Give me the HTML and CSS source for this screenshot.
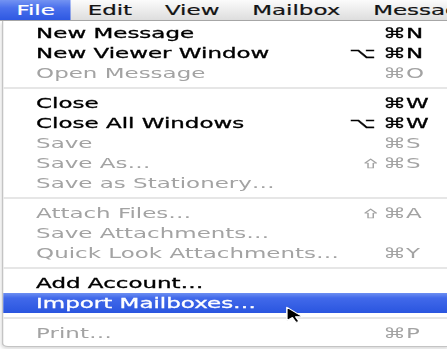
FILE: index.html
```html
<!DOCTYPE html>
<html lang="en">
<head>
    <meta charset="UTF-8">
    <meta name="viewport" content="width=device-width, initial-scale=1.0">
    <title>Mail - File menu</title>
    <link rel="stylesheet" href="styles.css">
</head>
<body>
    <div class="screen">
        <div class="menubar">
            <span class="title active">File</span>
            <span class="title">Edit</span>
            <span class="title">View</span>
            <span class="title">Mailbox</span>
            <span class="title">Message</span>
        </div>

        <div class="menu">
            <div class="item"><span class="label">New Message</span><span class="mods">&#8984;</span><span class="key">N</span></div>
            <div class="item"><span class="label">New Viewer Window</span><span class="mods">&#8997; &#8984;</span><span class="key">N</span></div>
            <div class="item off"><span class="label">Open Message</span><span class="mods">&#8984;</span><span class="key">O</span></div>
            <div class="sep"></div>

            <div class="item"><span class="label">Close</span><span class="mods">&#8984;</span><span class="key">W</span></div>
            <div class="item"><span class="label">Close All Windows</span><span class="mods">&#8997; &#8984;</span><span class="key">W</span></div>
            <div class="item off"><span class="label">Save</span><span class="mods">&#8984;</span><span class="key">S</span></div>
            <div class="item off"><span class="label">Save As&hellip;</span><span class="mods"><svg class="shift" viewBox="0 0 8 10" width="8" height="11"><path d="M4 0.6 L7.5 4.6 L5.6 4.6 L5.6 9.4 L2.4 9.4 L2.4 4.6 L0.5 4.6 Z" fill="none" stroke="currentColor" stroke-width="0.9" stroke-linejoin="round"/></svg>&#8984;</span><span class="key">S</span></div>
            <div class="item off"><span class="label">Save as Stationery&hellip;</span><span class="mods"></span><span class="key"></span></div>
            <div class="sep"></div>

            <div class="item off"><span class="label">Attach Files&hellip;</span><span class="mods"><svg class="shift" viewBox="0 0 8 10" width="8" height="11"><path d="M4 0.6 L7.5 4.6 L5.6 4.6 L5.6 9.4 L2.4 9.4 L2.4 4.6 L0.5 4.6 Z" fill="none" stroke="currentColor" stroke-width="0.9" stroke-linejoin="round"/></svg>&#8984;</span><span class="key">A</span></div>
            <div class="item off"><span class="label">Save Attachments&hellip;</span><span class="mods"></span><span class="key"></span></div>
            <div class="item off"><span class="label">Quick Look Attachments&hellip;</span><span class="mods">&#8984;</span><span class="key">Y</span></div>
            <div class="sep"></div>

            <div class="item"><span class="label">Add Account&hellip;</span><span class="mods"></span><span class="key"></span></div>
            <div class="item hover"><span class="label">Import Mailboxes&hellip;</span><span class="mods"></span><span class="key"></span></div>
            <div class="sep"></div>

            <div class="item off"><span class="label">Print&hellip;</span><span class="mods">&#8984;</span><span class="key">P</span></div>
        </div>

        <!-- mouse pointer over the highlighted row -->
        <svg class="cursor" viewBox="0 0 12 19" width="11" height="22">
            <path d="M1 1 L1 15.5 L4.6 12.2 L7 17.6 L9.2 16.6 L6.9 11.4 L11.5 11.4 Z" fill="#000" stroke="#fff" stroke-width="1" stroke-linejoin="round"/>
        </svg>
    </div>
</body>
</html>
```

FILE: styles.css
```css
body {
    margin: 0;
    background: #ffffff;
    font-family: "DejaVu Sans", Verdana, sans-serif;
    font-size: 14px;
    color: #000;
    overflow: hidden;
}

/* the screenshot was blown up wider than tall, so draw at native size and stretch */
.screen {
    position: relative;
    width: 272.6px;
    height: 349px;
    transform: scaleX(1.64);
    transform-origin: 0 0;
}

.menubar {
    display: flex;
    height: 20px;
    line-height: 20px;
    white-space: nowrap;
    overflow: hidden;
    background: linear-gradient(#fbfbfb, #e9e9e9 60%, #dedede);
    border-bottom: 1px solid #a8a8a8;
}

.title {
    padding: 0 10px;
    color: #141414;
    -webkit-text-stroke: 0.2px #141414;
}

.title.active {
    color: #fff;
    -webkit-text-stroke: 0.2px #fff;
    background: linear-gradient(#7393f2, #4a70ec 40%, #2e58e2);
}

.menu {
    margin-left: 1px;
    padding: 2px 0 3px;
    background: #fff;
    border-left: 1px solid #c4c4c4;
    border-bottom: 1px solid #c4c4c4;
    border-bottom-left-radius: 4px;
    box-shadow: 0 2px 3px rgba(0, 0, 0, 0.15);
}

.item {
    display: grid;
    grid-template-columns: 1fr auto 15px;
    height: 20px;
    line-height: 20px;
    padding: 0 10px 0 20px;
    white-space: nowrap;
    -webkit-text-stroke: 0.3px #000;
}

.mods {
    text-align: right;
}

.shift {
    margin-right: 4px;
    vertical-align: -1px;
}

.item.off {
    color: #a3a3a3;
    -webkit-text-stroke: 0;
}

.item.hover {
    color: #fff;
    -webkit-text-stroke: 0.3px #fff;
    background: linear-gradient(#6d8ff2, #4169ea 25%, #2a55df);
}

.sep {
    height: 10px;
    display: flex;
    align-items: center;
}

.sep::before {
    content: "";
    flex: 1;
    height: 2px;
    background: #e6e6e6;
}

.cursor {
    position: absolute;
    left: 174px;
    top: 304px;
}
```
